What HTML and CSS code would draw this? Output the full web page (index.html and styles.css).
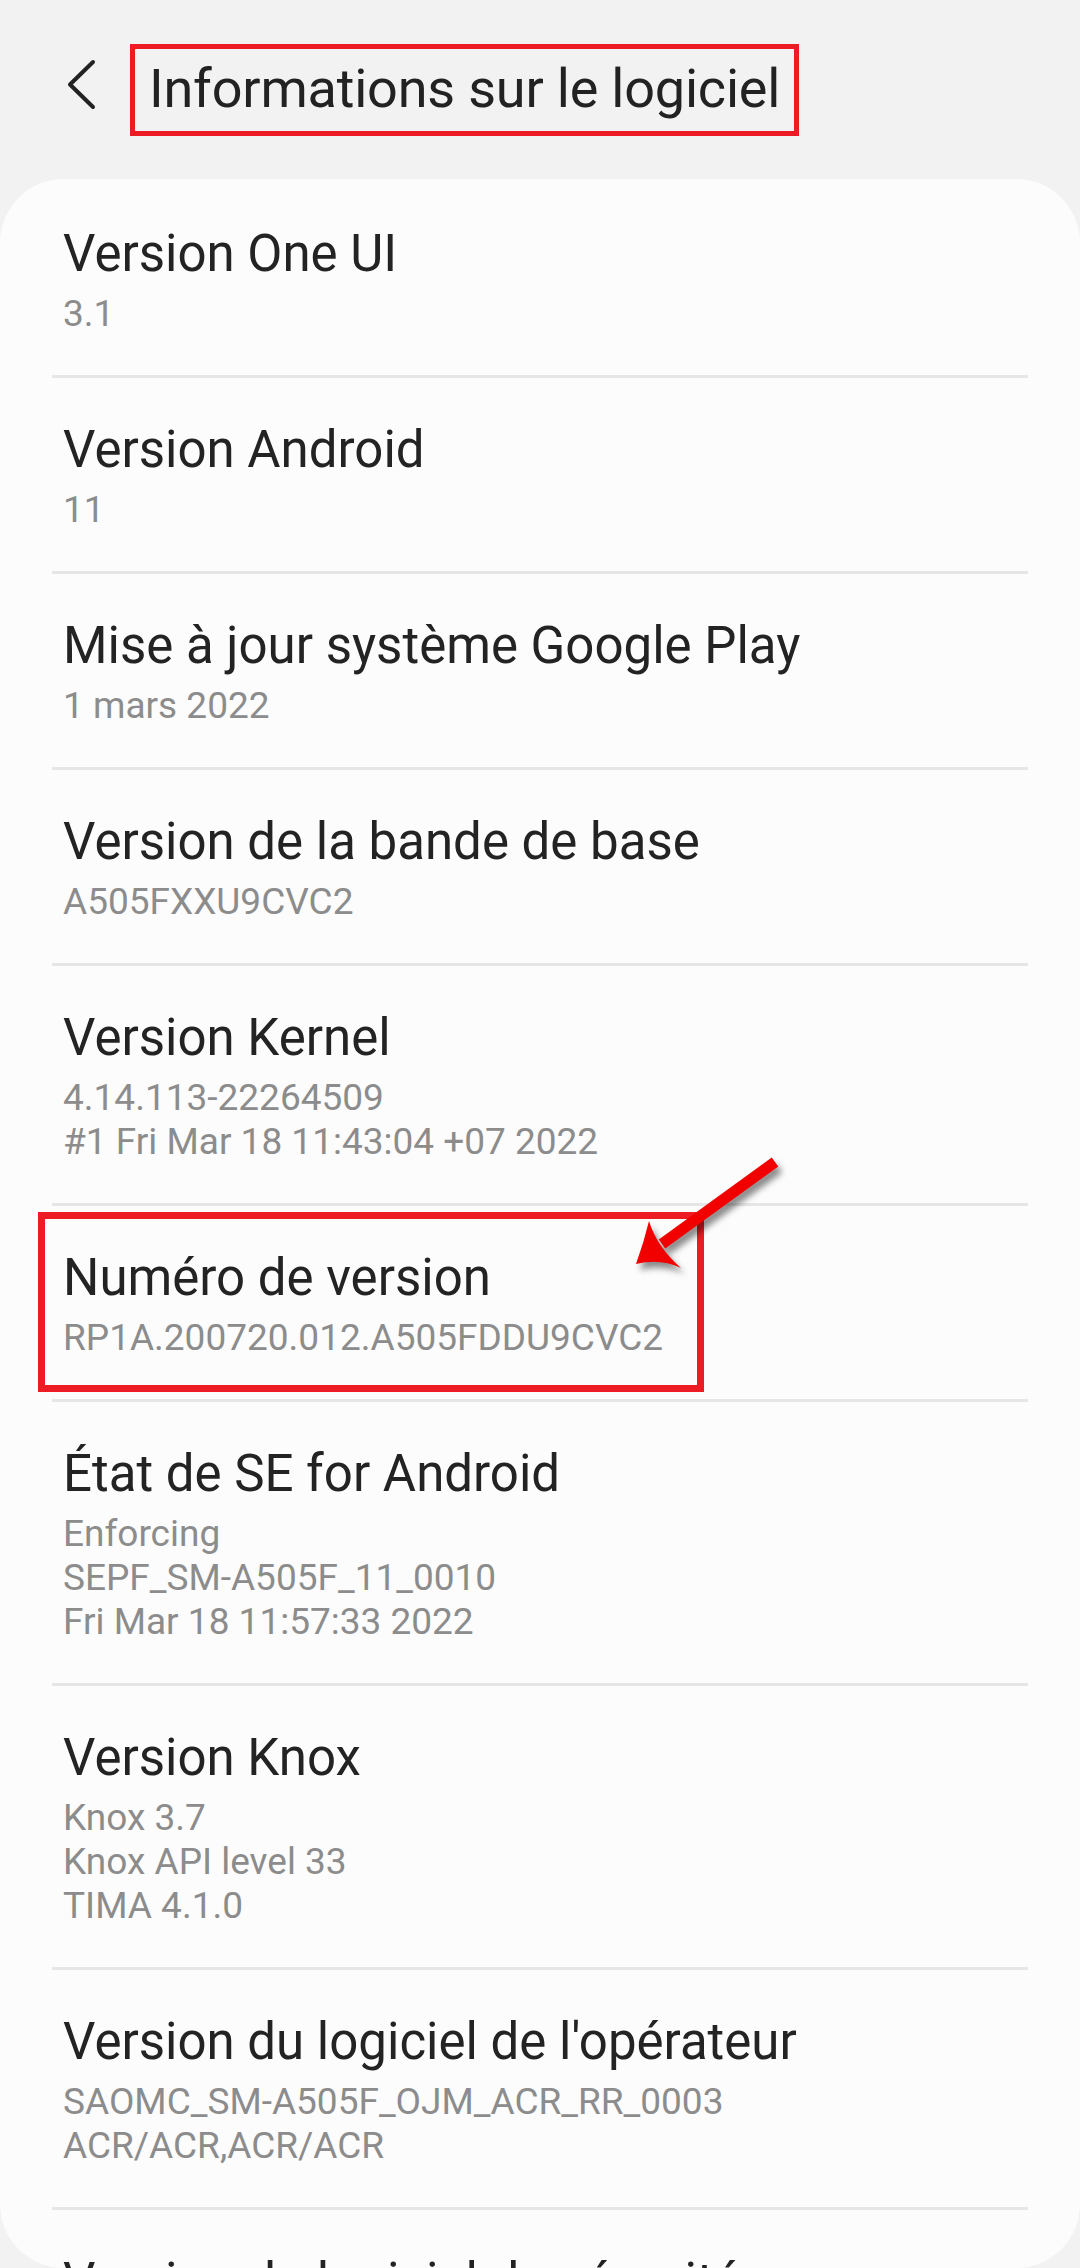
FILE: index.html
```html
<!DOCTYPE html>
<html lang="fr">
<head>
<meta charset="utf-8">
<title>Informations sur le logiciel</title>
<link rel="stylesheet" href="styles.css">
</head>
<body>
<div class="screen">
  <header class="appbar">
    <svg class="back" width="36" height="54" viewBox="0 0 36 54" aria-hidden="true">
      <path d="M31 4 L8 26.5 L31 49" fill="none" stroke="#222" stroke-width="4" stroke-linecap="round" stroke-linejoin="round"/>
    </svg>
    <h1 class="title highlight-box">Informations sur le logiciel</h1>
  </header>

  <main class="card">
    <section class="item">
      <div class="item-title">Version One UI</div>
      <div class="item-sub"><div>3.1</div></div>
    </section>
    <div class="divider"></div>
    <section class="item">
      <div class="item-title">Version Android</div>
      <div class="item-sub"><div>11</div></div>
    </section>
    <div class="divider"></div>
    <section class="item">
      <div class="item-title">Mise à jour système Google Play</div>
      <div class="item-sub"><div>1 mars 2022</div></div>
    </section>
    <div class="divider"></div>
    <section class="item">
      <div class="item-title">Version de la bande de base</div>
      <div class="item-sub"><div>A505FXXU9CVC2</div></div>
    </section>
    <div class="divider"></div>
    <section class="item">
      <div class="item-title">Version Kernel</div>
      <div class="item-sub"><div>4.14.113-22264509</div><div>#1 Fri Mar 18 11:43:04 +07 2022</div></div>
    </section>
    <div class="divider"></div>
    <section class="item item-marked">
      <div class="mark-box"></div>
      <div class="item-title">Numéro de version</div>
      <div class="item-sub"><div>RP1A.200720.012.A505FDDU9CVC2</div></div>
    </section>
    <div class="divider"></div>
    <section class="item">
      <div class="item-title">État de SE for Android</div>
      <div class="item-sub"><div>Enforcing</div><div>SEPF_SM-A505F_11_0010</div><div>Fri Mar 18 11:57:33 2022</div></div>
    </section>
    <div class="divider"></div>
    <section class="item">
      <div class="item-title">Version Knox</div>
      <div class="item-sub"><div>Knox 3.7</div><div>Knox API level 33</div><div>TIMA 4.1.0</div></div>
    </section>
    <div class="divider"></div>
    <section class="item">
      <div class="item-title">Version du logiciel de l'opérateur</div>
      <div class="item-sub"><div>SAOMC_SM-A505F_OJM_ACR_RR_0003</div><div>ACR/ACR,ACR/ACR</div></div>
    </section>
    <div class="divider"></div>
    <section class="item">
      <div class="item-title">Version du logiciel de sécurité</div>
      <div class="item-sub"><div>SMR Mar-2022 Release 1</div></div>
    </section>
  </main>

  <svg class="arrow" width="180" height="150" viewBox="620 1140 180 150" aria-hidden="true">
    <line x1="775" y1="1162" x2="662" y2="1244" stroke="#f20000" stroke-width="11" stroke-linecap="butt"/>
    <path d="M636 1264 Q644 1242 649 1221 Q657 1247 681 1268 Q660 1258 636 1264 Z" fill="#f20000"/>
  </svg>
</div>
</body>
</html>
```

FILE: styles.css
```css
html, body {
  margin: 0;
  padding: 0;
}

body {
  background: #f2f2f2;
  font-family: Roboto, "Noto Sans", "Liberation Sans", sans-serif;
  width: 1080px;
  height: 2268px;
  overflow: hidden;
}

.screen {
  position: relative;
  width: 1080px;
  height: 2268px;
  display: flex;
  flex-direction: column;
}

.appbar {
  display: flex;
  align-items: flex-start;
  padding: 44px 0 43px 0;
  height: 92px;
}

.back {
  display: block;
  margin: 14px 32px 0 62px;
}

.title {
  margin: 0;
  font-weight: 400;
  font-size: 54px;
  line-height: 80px;
  letter-spacing: -0.2px;
  color: #222222;
}

.highlight-box {
  border: 5px solid #ed1c24;
  padding: 0 15px 2px 14px;
  height: 80px;
  width: 630px;
  white-space: nowrap;
}

.card {
  flex: 1;
  background: #fcfcfc;
  border-radius: 64px;
  overflow: hidden;
  padding-top: 3px;
}

.item {
  position: relative;
  padding: 42px 52px 39px 63px;
}

.item-title {
  font-size: 51px;
  line-height: 60px;
  color: #232323;
  white-space: nowrap;
}

.item-sub {
  margin-top: 8px;
  font-size: 37px;
  line-height: 44px;
  color: #8c8c8c;
  white-space: nowrap;
}

.divider {
  height: 3px;
  margin: 0 52px;
  background: #e6e6e6;
}

.mark-box {
  position: absolute;
  left: 38px;
  top: 6px;
  width: 652px;
  height: 166px;
  border: 7px solid #ed1c24;
}

.arrow {
  position: absolute;
  left: 620px;
  top: 1140px;
  filter: drop-shadow(4px 6px 3px rgba(0, 0, 0, 0.45));
}
```
